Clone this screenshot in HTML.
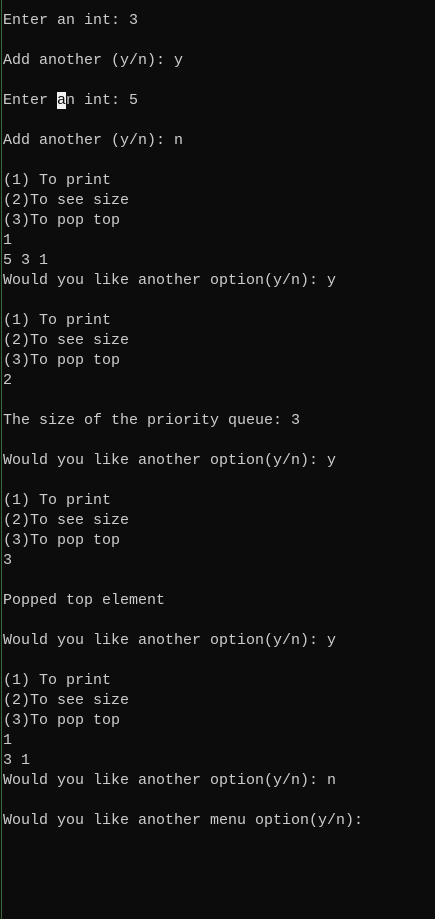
<!DOCTYPE html>
<html><head><meta charset="utf-8"><style>
html,body{margin:0;padding:0;background:#0c0c0c;width:435px;height:919px;overflow:hidden}
.bar{position:absolute;left:1px;top:0;width:1px;height:919px;background:#3a6a3a}
pre{position:absolute;left:3px;top:11px;margin:0;font-family:"Liberation Mono",monospace;font-size:15px;line-height:20px;color:#cccccc;white-space:pre}
.cur{background:#f2f2f2;color:#0c0c0c}
</style></head><body><div class="bar"></div><pre>Enter an int: 3

Add another (y/n): y

Enter <span class="cur">a</span>n int: 5

Add another (y/n): n

(1) To print
(2)To see size
(3)To pop top
1
5 3 1
Would you like another option(y/n): y

(1) To print
(2)To see size
(3)To pop top
2

The size of the priority queue: 3

Would you like another option(y/n): y

(1) To print
(2)To see size
(3)To pop top
3

Popped top element

Would you like another option(y/n): y

(1) To print
(2)To see size
(3)To pop top
1
3 1
Would you like another option(y/n): n

Would you like another menu option(y/n):</pre></body></html>
